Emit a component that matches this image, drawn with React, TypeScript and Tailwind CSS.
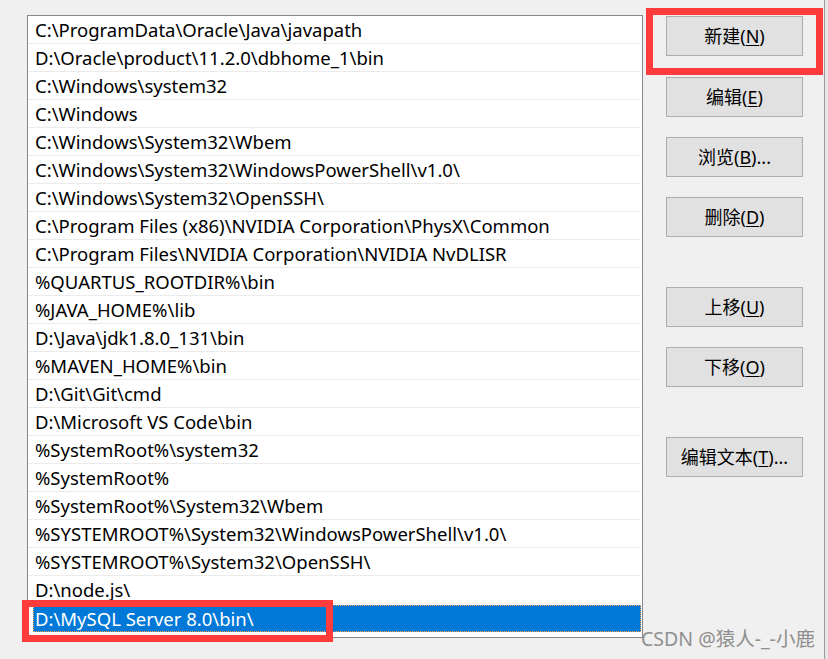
import React from 'react';

const paths = [
  'C:\\ProgramData\\Oracle\\Java\\javapath',
  'D:\\Oracle\\product\\11.2.0\\dbhome_1\\bin',
  'C:\\Windows\\system32',
  'C:\\Windows',
  'C:\\Windows\\System32\\Wbem',
  'C:\\Windows\\System32\\WindowsPowerShell\\v1.0\\',
  'C:\\Windows\\System32\\OpenSSH\\',
  'C:\\Program Files (x86)\\NVIDIA Corporation\\PhysX\\Common',
  'C:\\Program Files\\NVIDIA Corporation\\NVIDIA NvDLISR',
  '%QUARTUS_ROOTDIR%\\bin',
  '%JAVA_HOME%\\lib',
  'D:\\Java\\jdk1.8.0_131\\bin',
  '%MAVEN_HOME%\\bin',
  'D:\\Git\\Git\\cmd',
  'D:\\Microsoft VS Code\\bin',
  '%SystemRoot%\\system32',
  '%SystemRoot%',
  '%SystemRoot%\\System32\\Wbem',
  '%SYSTEMROOT%\\System32\\WindowsPowerShell\\v1.0\\',
  '%SYSTEMROOT%\\System32\\OpenSSH\\',
  'D:\\node.js\\',
  'D:\\MySQL Server 8.0\\bin\\',
];

const buttons = [
  { label: '新建', key: 'N', tail: '', mt: 'mt-px' },
  { label: '编辑', key: 'E', tail: '', mt: 'mt-[21px]' },
  { label: '浏览', key: 'B', tail: '...', mt: 'mt-[20px]' },
  { label: '删除', key: 'D', tail: '', mt: 'mt-[20px]' },
  { label: '上移', key: 'U', tail: '', mt: 'mt-[50px]' },
  { label: '下移', key: 'O', tail: '', mt: 'mt-[20px]' },
  { label: '编辑文本', key: 'T', tail: '...', mt: 'mt-[50px]' },
];

const font = { fontFamily: '"Noto Sans", "Noto Sans CJK SC", sans-serif' };

export default function App() {
  const last = paths.length - 1;
  return (
    <div className="relative w-[828px] h-[659px] overflow-hidden bg-[#f0f0f0] text-black" style={font}>
      <div className="flex pl-[27px] pt-[15px]">
        {/* path list */}
        <div className="w-[616px] h-[623px] border border-[#828790] bg-white">
          {paths.map((p, i) =>
            i === last ? (
              <div key={p} className="h-[28px] pl-[5px] pr-px pt-px">
                <div className="h-[27px] flex items-center bg-[#0078d7] text-white border border-dotted border-[#f7a34a] pl-px pt-[2px] text-[18.5px] leading-none">
                  {p}
                </div>
              </div>
            ) : (
              <div
                key={p}
                className="h-[28px] flex items-center pl-[7px] pt-[2px] mr-px border-b border-[#ebebeb] text-[18.5px] leading-none"
              >
                {p}
              </div>
            )
          )}
        </div>

        {/* buttons */}
        <div className="flex flex-col ml-[23px] w-[137px]">
          {buttons.map((b) => (
            <div
              key={b.label}
              className={`${b.mt} h-[40px] flex items-center justify-center bg-[#e1e1e1] border border-[#adadad] text-[18px]`}
            >
              {b.label}(<span className="underline underline-offset-2">{b.key}</span>){b.tail}
            </div>
          ))}
        </div>

        {/* neighbouring window edge */}
        <div className="ml-[21px] w-px h-[659px] -mt-[15px] bg-[#9a9a9a]" />
        <div className="flex-1 h-[659px] -mt-[15px] bg-[#e6e6e6]" />
      </div>

      {/* annotations */}
      <div className="absolute left-[646px] top-[8px] w-[177px] h-[67px] border-[7px] border-[#ff3b3b]" />
      <div className="absolute left-[22px] top-[600px] w-[311px] h-[42px] border-[7px] border-[#ff3b3b]" />
      <div className="absolute left-[641px] top-[629px] text-[19.5px] text-[#8f8f8f] leading-none whitespace-nowrap">
        CSDN @猿人-_-小鹿
      </div>
    </div>
  );
}
